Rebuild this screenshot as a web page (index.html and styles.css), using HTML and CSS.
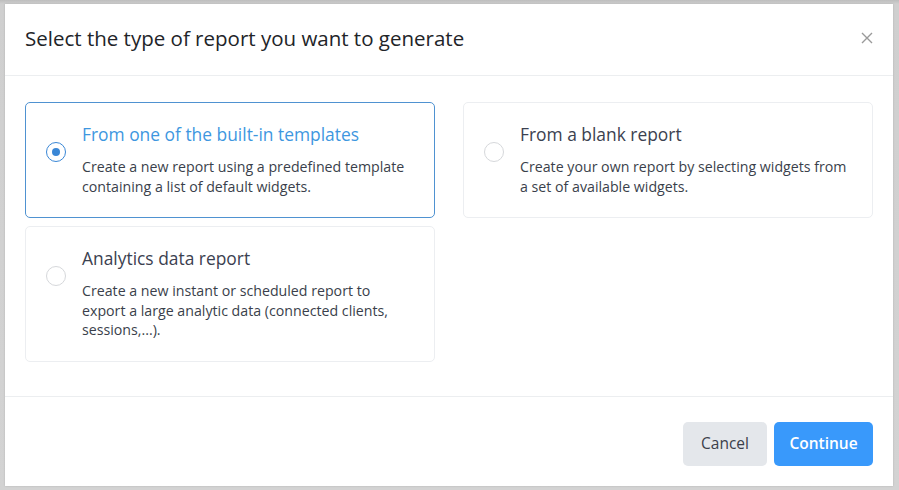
FILE: index.html
```html
<!DOCTYPE html>
<html lang="en">
<head>
<meta charset="utf-8">
<title>Select report type</title>
<link rel="stylesheet" href="styles.css">
</head>
<body>
<div class="modal">
  <div class="modal-header">
    <h1 class="modal-title">Select the type of report you want to generate</h1>
    <button class="close" aria-label="Close">
      <svg width="12" height="12" viewBox="0 0 12 12"><path d="M1 1L11 11M11 1L1 11" stroke="#9a9a9a" stroke-width="1.4" fill="none"/></svg>
    </button>
  </div>
  <div class="modal-body">
    <label class="option selected">
      <span class="radio"><span class="dot"></span></span>
      <span class="option-text">
        <span class="option-title">From one of the built-in templates</span>
        <span class="option-desc">Create a new report using a predefined template<br>containing a list of default widgets.</span>
      </span>
    </label>
    <label class="option">
      <span class="radio"></span>
      <span class="option-text">
        <span class="option-title">From a blank report</span>
        <span class="option-desc">Create your own report by selecting widgets from<br>a set of available widgets.</span>
      </span>
    </label>
    <label class="option">
      <span class="radio"></span>
      <span class="option-text">
        <span class="option-title">Analytics data report</span>
        <span class="option-desc">Create a new instant or scheduled report to<br>export a large analytic data (connected clients,<br>sessions,...).</span>
      </span>
    </label>
  </div>
  <div class="modal-footer">
    <button class="btn btn-cancel">Cancel</button>
    <button class="btn btn-primary">Continue</button>
  </div>
</div>
</body>
</html>
```
FILE: styles.css
```css
* { box-sizing: border-box; }
html, body { margin: 0; padding: 0; }
body {
  width: 899px;
  height: 490px;
  background: linear-gradient(#bdbdbd, #cfcfcf 4px, #d3d3d3);
  font-family: "Open Sans", "Noto Sans", sans-serif;
  padding: 4px 6px 4px 5px;
  overflow: hidden;
}
.modal {
  background: #fff;
  width: 888px;
  height: 482px;
  display: flex;
  flex-direction: column;
  box-shadow: 0 0 2px rgba(0,0,0,0.15);
}
.modal-header {
  height: 72px;
  border-bottom: 1px solid #eceef0;
  display: flex;
  align-items: center;
  justify-content: space-between;
  padding: 0 20px 3px 20px;
}
.modal-title {
  margin: 0;
  font-size: 20.5px;
  font-weight: 400;
  color: #222428;
}
.close {
  border: 0;
  background: none;
  padding: 0;
  width: 12px;
  height: 12px;
  display: flex;
}
.modal-body {
  display: grid;
  grid-template-columns: 410px 410px;
  column-gap: 28px;
  row-gap: 8px;
  padding: 26px 20px 34px 20px;
  align-content: start;
  flex: 1;
}
.option {
  display: flex;
  align-items: flex-start;
  border: 1px solid #eceef1;
  border-radius: 5px;
  padding: 19px 10px 21px 20px;
}
.option.selected {
  border-color: #4f92d1;
}
.radio {
  flex: none;
  width: 20px;
  height: 20px;
  border-radius: 50%;
  border: 1px solid #d6d8db;
  margin-top: 20px;
  margin-right: 16px;
  display: flex;
  align-items: center;
  justify-content: center;
}
.selected .radio {
  border: 1.5px solid #3a87d6;
}
.dot {
  width: 8px;
  height: 8px;
  border-radius: 50%;
  background: #3a87d6;
}
.option-text {
  display: flex;
  flex-direction: column;
  white-space: nowrap;
}
.option-title {
  font-size: 17.4px;
  font-weight: 500;
  line-height: 24px;
  color: #3b4150;
}
.selected .option-title {
  color: #3e97df;
}
.option-desc {
  margin-top: 11px;
  font-size: 14.2px;
  line-height: 19.5px;
  color: #3a3f4b;
}
.modal-footer {
  border-top: 1px solid #eceef0;
  height: 90px;
  display: flex;
  justify-content: flex-end;
  align-items: flex-start;
  padding: 25px 20px 0 0;
  gap: 7px;
}
.btn {
  height: 44px;
  border: 0;
  border-radius: 5px;
  font-family: inherit;
  font-size: 15.5px;
  padding: 0 0 2px;
}
.btn-cancel {
  width: 84px;
  background: #e4e7eb;
  color: #3b404a;
}
.btn-primary {
  width: 99px;
  background: #3999fb;
  color: #fff;
  font-weight: 600;
}
```
